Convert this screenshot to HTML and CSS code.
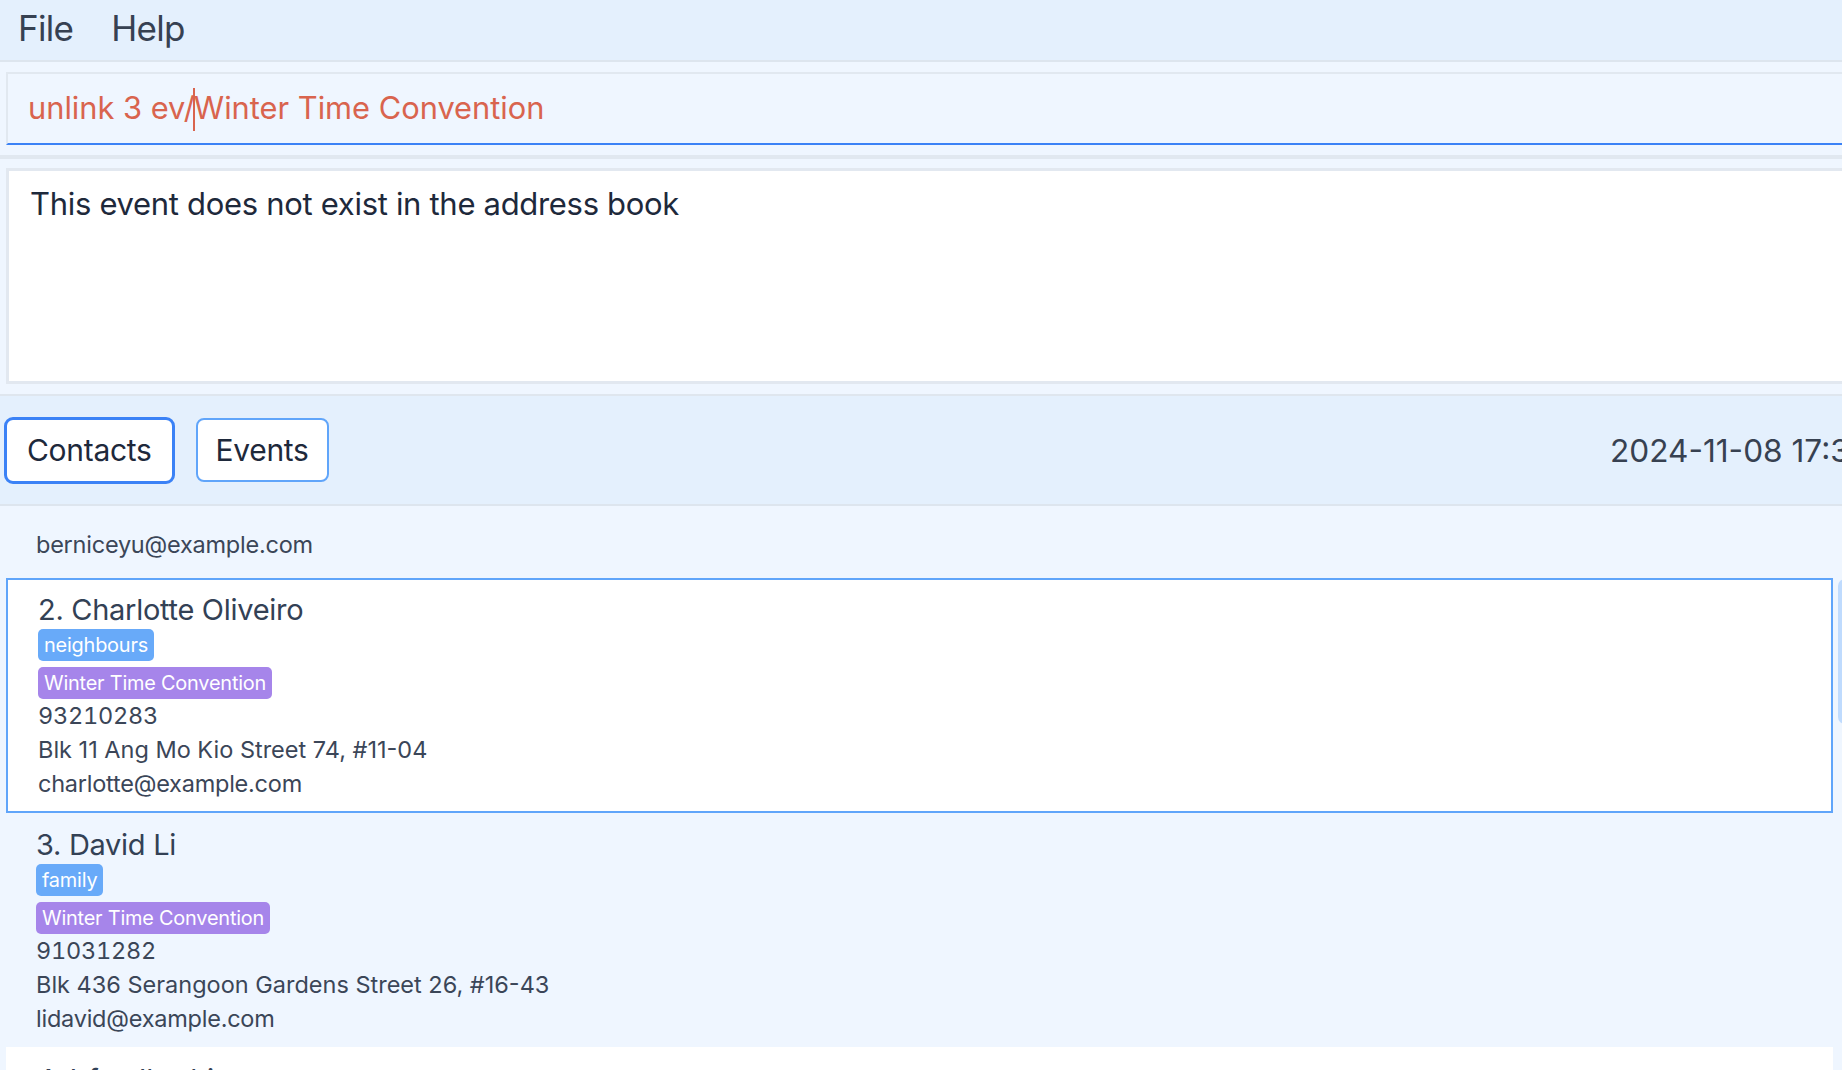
FILE: index.html
```html
<!DOCTYPE html>
<html lang="en">
<head>
<meta charset="utf-8">
<title>Address Book</title>
<link rel="stylesheet" href="styles.css">
</head>
<body>
<div class="app">
  <header class="menubar">
    <span class="menu-item">File</span>
    <span class="menu-item">Help</span>
  </header>

  <section class="command-pane">
    <div class="command-box">
      <span class="command-text">unlink 3 ev/<span class="caret"></span>Winter Time Convention</span>
    </div>
  </section>

  <section class="result-pane">
    <div class="result-box">This event does not exist in the address book</div>
  </section>

  <nav class="tabbar">
    <button class="tab tab-active">Contacts</button>
    <button class="tab">Events</button>
    <span class="clock">2024-11-08 17:35</span>
  </nav>

  <main class="list-pane">
    <div class="list">
      <div class="cell cell-partial">
        <div class="line">berniceyu@example.com</div>
      </div>

      <div class="cell cell-even cell-selected">
        <div class="name">2. Charlotte Oliveiro</div>
        <span class="tag tag-blue">neighbours</span>
        <span class="tag tag-purple">Winter Time Convention</span>
        <div class="line phone">93210283</div>
        <div class="line address">Blk 11 Ang Mo Kio Street 74, #11-04</div>
        <div class="line">charlotte@example.com</div>
      </div>

      <div class="cell cell-odd">
        <div class="name">3. David Li</div>
        <span class="tag tag-blue">family</span>
        <span class="tag tag-purple">Winter Time Convention</span>
        <div class="line phone">91031282</div>
        <div class="line address">Blk 436 Serangoon Gardens Street 26, #16-43</div>
        <div class="line">lidavid@example.com</div>
      </div>

      <div class="cell cell-even">
        <div class="name">4. Irfan Ibrahim</div>
        <span class="tag tag-blue">classmates</span>
        <div class="line phone">92492021</div>
        <div class="line address">Blk 47 Tampines Street 20, #17-35</div>
        <div class="line">irfan@example.com</div>
      </div>
    </div>
    <div class="scrollbar"><div class="thumb"></div></div>
  </main>
</div>
</body>
</html>
```

FILE: styles.css
```css
html, body {
  margin: 0;
  padding: 0;
}

body {
  background: #eff6ff;
  overflow: hidden;
  font-family: "Inter", "Noto Sans", sans-serif;
  color: #334155;
}

.app {
  width: 1880px;
  height: 1070px;
  overflow: hidden;
  display: flex;
  flex-direction: column;
}

/* menu bar */
.menubar {
  height: 56px;
  flex: none;
  display: flex;
  align-items: center;
  gap: 38px;
  padding: 0 0 4px 18px;
  background: #e4f0fd;
  border-bottom: 2px solid #dde5ee;
}

.menu-item {
  font-size: 35px;
  letter-spacing: -0.02em;
  color: #364152;
}

/* command box */
.command-pane {
  flex: none;
  padding: 10px 0 10px 6px;
  border-bottom: 4px solid #e1e8f0;
}

.command-box {
  height: 68px;
  display: flex;
  align-items: center;
  padding: 1px 0 0 20px;
  background: #eff6ff;
  border-top: 2px solid #e1e8f0;
  border-left: 2px solid #e1e8f0;
  border-bottom: 2px solid #3b82f6;
}

.command-text {
  font-size: 30.8px;
  color: #d9644e;
  white-space: nowrap;
}

.caret {
  display: inline-block;
  width: 1.5px;
  height: 43px;
  margin: 0 -1px 0 -1.5px;
  vertical-align: -12px;
  background: #d9644e;
}

/* result box */
.result-pane {
  flex: none;
  padding: 9px 0 10px 6px;
  border-bottom: 2px solid #dfe6ee;
}

.result-box {
  height: 196px;
  padding: 14px 0 0 21px;
  background: #ffffff;
  border: 3px solid #e2e8f0;
  border-right: none;
  font-size: 31px;
  line-height: 1.2;
  letter-spacing: -0.01em;
  color: #1e293b;
}

/* tab bar */
.tabbar {
  flex: none;
  height: 108px;
  display: flex;
  align-items: center;
  gap: 21px;
  padding: 0 11px 0 4px;
  background: #e4f0fd;
  border-bottom: 2px solid #dde5ee;
}

.tab {
  height: 64px;
  padding: 0 18px;
  background: #ffffff;
  border: 2px solid #60a5fa;
  border-radius: 8px;
  font-family: "Inter", "Noto Sans", sans-serif;
  font-size: 30px;
  letter-spacing: -0.01em;
  color: #1e293b;
}

.tab-active {
  height: 67px;
  padding: 0 20px;
  border: 3px solid #3b82f6;
  border-radius: 9px;
}

.clock {
  margin-left: auto;
  font-size: 31.6px;
  color: #374151;
}

/* list */
.list-pane {
  flex: 1;
  display: grid;
  grid-template-columns: 1fr 14px;
  column-gap: 5px;
  padding: 0 28px 0 6px;
  overflow: hidden;
}

.list {
  display: flex;
  flex-direction: column;
}

.cell {
  flex: none;
  display: flex;
  flex-direction: column;
  align-items: flex-start;
  padding: 12.5px 0 9.2px 30px;
  border-top: 2px solid transparent;
  border-bottom: 2px solid transparent;
}

.cell-even {
  background: #ffffff;
}

.cell-partial {
  padding-top: 20.3px;
  padding-bottom: 13.7px;
}

.cell-selected {
  border: 2px solid #60a5fa;
  background: #ffffff;
}

.name {
  font-size: 29px;
  line-height: 36px;
  letter-spacing: -0.01em;
  color: #334155;
}

.tag {
  height: 32px;
  line-height: 32px;
  padding: 0 6px;
  border-radius: 5px;
  font-size: 19.9px;
  letter-spacing: -0.01em;
  color: #ffffff;
  margin-top: 6px;
}

.name + .tag {
  margin-top: 1px;
}

.tag-blue {
  background: #68aaf9;
}

.tag-purple {
  background: #a685ea;
}

.line {
  font-size: 23.5px;
  line-height: 34px;
  letter-spacing: -0.01em;
  color: #3b4658;
}

.phone {
  font-feature-settings: "tnum";
}

.address {
  letter-spacing: 0;
}

.scrollbar {
  position: relative;
}

.thumb {
  margin-top: 73px;
  height: 145px;
  width: 14px;
  border-radius: 7px;
  background: #bfdbfe;
}
```
